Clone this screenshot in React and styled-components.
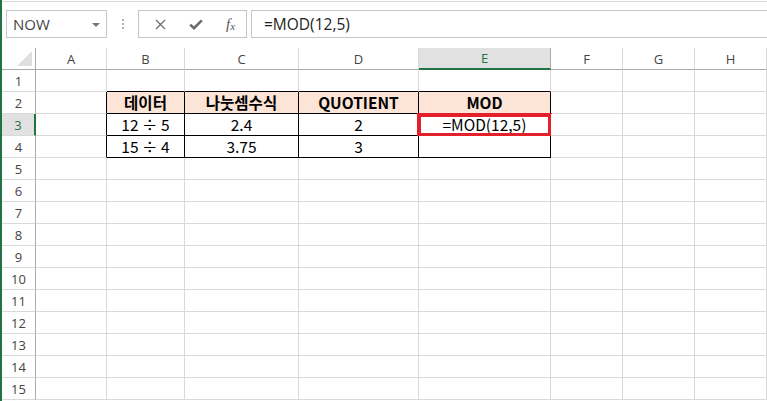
import styled, { createGlobalStyle } from "styled-components";

const GlobalStyle = createGlobalStyle`
  html, body {
    margin: 0;
    padding: 0;
    background: #ffffff;
  }
  * {
    box-sizing: border-box;
  }
`;

const green = "#217346";
const gridLine = "#d9d9d9";

const columns = ["A", "B", "C", "D", "E", "F", "G", "H"];
const rowCount = 15;

// 표 내용 (행 번호 -> 열 인덱스)
const data = {
  2: { 1: "데이터", 2: "나눗셈수식", 3: "QUOTIENT", 4: "MOD" },
  3: { 1: "12 ÷ 5", 2: "2.4", 3: "2", 4: "=MOD(12,5)" },
  4: { 1: "15 ÷ 4", 2: "3.75", 3: "3" },
};

const App = () => {
  const inTableRow = (r) => r >= 2 && r <= 4;

  return (
    <Page>
      <GlobalStyle />
      <TopEdge />
      <FormulaBar>
        <NameBox>
          <span>NOW</span>
          <DropArrow />
        </NameBox>
        <Grip>
          <i />
          <i />
          <i />
        </Grip>
        <FuncBox>
          <IconBtn>
            <svg width="11" height="11" viewBox="0 0 11 11">
              <path d="M1 1 L10 10 M10 1 L1 10" stroke="#707070" strokeWidth="1.3" />
            </svg>
          </IconBtn>
          <IconBtn>
            <svg width="14" height="11" viewBox="0 0 14 11">
              <path d="M1.2 5.6 L5 9.2 L12.8 1.4" stroke="#6b6b6b" strokeWidth="2.6" fill="none" />
            </svg>
          </IconBtn>
          <IconBtn>
            <Fx>
              f<sub>x</sub>
            </Fx>
          </IconBtn>
        </FuncBox>
        <FormulaInput>=MOD(12,5)</FormulaInput>
      </FormulaBar>

      <Sheet>
        <Corner>
          <svg width="15" height="15" viewBox="0 0 15 15">
            <polygon points="0,15 15,0 15,15" fill="#dfdfdf" />
          </svg>
        </Corner>
        {columns.map((c) => (
          <ColHead key={c} $active={c === "E"}>
            {c}
          </ColHead>
        ))}

        {Array.from({ length: rowCount }, (_, i) => i + 1).map((r) => [
          <RowHead key={`h${r}`} $active={r === 3}>
            {r}
          </RowHead>,
          ...columns.map((c, ci) => {
            const right = inTableRow(r) && ci <= 4;
            const bottom = r >= 1 && r <= 4 && ci >= 1 && ci <= 4;
            const text = data[r] ? data[r][ci] : undefined;
            return (
              <Cell
                key={`${r}${c}`}
                $right={right}
                $bottom={bottom}
                $fill={r === 2 && ci >= 1 && ci <= 4}
                $bold={r === 2}
              >
                {text}
                {r === 3 && c === "E" && (
                  <>
                    <Selection />
                    <Handle />
                  </>
                )}
              </Cell>
            );
          }),
        ])}
      </Sheet>
    </Page>
  );
};

const Page = styled.div`
  width: 767px;
  height: 401px;
  overflow: hidden;
  border-left: 2px solid ${green};
  background: #ffffff;
`;

const TopEdge = styled.div`
  height: 2px;
  border-bottom: 1px solid #d6d6d6;
  margin-left: -2px;
`;

const FormulaBar = styled.div`
  display: flex;
  align-items: center;
  height: 28px;
  margin-top: 8px;
  padding-left: 4px;
  font-family: "Open Sans", "Noto Sans", sans-serif;
`;

const NameBox = styled.div`
  position: relative;
  width: 101px;
  height: 28px;
  border: 1px solid #c6c6c6;
  display: flex;
  align-items: center;
  padding-left: 6px;
  font-size: 15px;
  color: #444444;
`;

const DropArrow = styled.div`
  position: absolute;
  right: 6px;
  top: 12px;
  width: 0;
  height: 0;
  border-left: 4px solid transparent;
  border-right: 4px solid transparent;
  border-top: 4px solid #777777;
`;

const Grip = styled.div`
  width: 31px;
  display: flex;
  flex-direction: column;
  align-items: center;
  gap: 2px;

  i {
    width: 2px;
    height: 2px;
    background: #b0b0b0;
  }
`;

const FuncBox = styled.div`
  width: 109px;
  height: 28px;
  border: 1px solid #c6c6c6;
  display: grid;
  grid-template-columns: 34px 38px 1fr;
  align-items: center;
  padding-left: 4px;
`;

const IconBtn = styled.div`
  display: flex;
  justify-content: center;
  align-items: center;
`;

const Fx = styled.span`
  font-family: "Liberation Serif", serif;
  font-style: italic;
  font-size: 15px;
  color: #555555;

  sub {
    font-size: 11px;
    vertical-align: -1px;
  }
`;

const FormulaInput = styled.div`
  flex: 1;
  height: 28px;
  margin-left: 4px;
  border: 1px solid #c6c6c6;
  border-right: none;
  display: flex;
  align-items: center;
  padding-left: 12px;
  font-size: 15.5px;
  color: #222222;
`;

const Sheet = styled.div`
  display: grid;
  grid-template-columns: 34px 71px 78px 114px 120px 132px 72px 72px 1fr;
  grid-auto-rows: 22px;
  margin-top: 10px;
`;

const Corner = styled.div`
  display: flex;
  justify-content: flex-end;
  align-items: flex-end;
  padding: 0 3px 3px 0;
  border-right: 1px solid #ababab;
  border-bottom: 1px solid #ababab;
`;

const ColHead = styled.div`
  display: flex;
  justify-content: center;
  align-items: center;
  font-family: "Open Sans", "Noto Sans", sans-serif;
  font-size: 13px;
  color: ${(p) => (p.$active ? green : "#444444")};
  background: ${(p) => (p.$active ? "#e1e1e1" : "#ffffff")};
  border-right: 1px solid ${(p) => (p.$active ? "#ababab" : gridLine)};
  border-bottom: ${(p) => (p.$active ? `2px solid ${green}` : "1px solid #ababab")};
`;

const RowHead = styled.div`
  display: flex;
  justify-content: center;
  align-items: center;
  font-family: "Open Sans", "Noto Sans", sans-serif;
  font-size: 13px;
  color: ${(p) => (p.$active ? green : "#444444")};
  background: ${(p) => (p.$active ? "#e1e1e1" : "#ffffff")};
  border-right: ${(p) => (p.$active ? `2px solid ${green}` : "1px solid #ababab")};
  border-bottom: 1px solid ${gridLine};
`;

const Cell = styled.div`
  position: relative;
  display: flex;
  justify-content: center;
  align-items: center;
  font-family: "Noto Sans CJK KR", "Noto Sans", sans-serif;
  font-size: 15.5px;
  font-weight: ${(p) => (p.$bold ? 700 : 400)};
  line-height: 1;
  color: #000000;
  background: ${(p) => (p.$fill ? "#fce4d6" : "#ffffff")};
  border-right: 1px solid ${(p) => (p.$right ? "#000000" : gridLine)};
  border-bottom: 1px solid ${(p) => (p.$bottom ? "#000000" : gridLine)};
`;

const Selection = styled.div`
  position: absolute;
  top: -1px;
  left: -2px;
  right: -2px;
  bottom: -2px;
  border: 4px solid #e4212b;
`;

const Handle = styled.div`
  position: absolute;
  right: -4px;
  bottom: 1px;
  width: 3px;
  height: 4px;
  background: ${green};
`;

export default App;
